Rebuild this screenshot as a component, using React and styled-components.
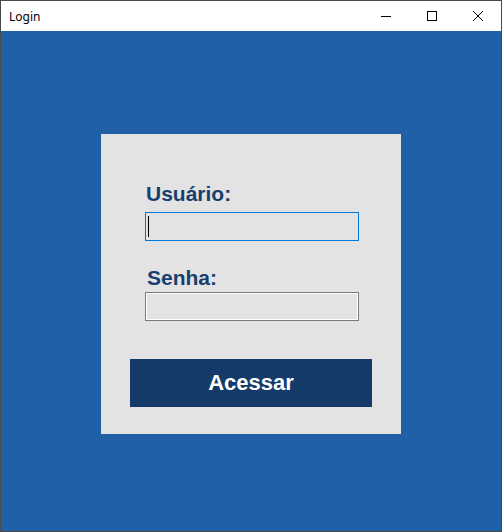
import styled, { createGlobalStyle } from 'styled-components';

const GlobalStyle = createGlobalStyle`
  html, body {
    margin: 0;
    padding: 0;
    background: #ffffff;
  }
`;

const Window = styled.div`
  width: 500px;
  height: 530px;
  border: 1px solid #4a4a4a;
  display: flex;
  flex-direction: column;
  font-family: 'Liberation Sans', Arial, sans-serif;
`;

const TitleBar = styled.div`
  height: 30px;
  background: #ffffff;
  display: flex;
  align-items: center;
`;

const Title = styled.span`
  flex: 1;
  padding-left: 8px;
  font-family: 'Noto Sans', 'Open Sans', sans-serif;
  font-size: 12px;
  color: #000000;
`;

const CaptionButton = styled.div`
  width: 46px;
  height: 30px;
  display: flex;
  align-items: center;
  justify-content: center;
`;

const Client = styled.div`
  flex: 1;
  background: #2060a6;
  display: flex;
  justify-content: center;
  align-items: flex-start;
  padding-top: 103px;
`;

const Panel = styled.div`
  width: 300px;
  height: 300px;
  box-sizing: border-box;
  background: #e3e3e3;
  padding-top: 48px;
  display: flex;
  flex-direction: column;
  align-items: flex-start;
`;

const Label = styled.div`
  margin-left: ${p => p.$left}px;
  margin-top: ${p => p.$top || 0}px;
  margin-bottom: ${p => p.$bottom}px;
  font-size: 21px;
  line-height: 24px;
  font-weight: bold;
  color: #173f6f;
`;

const Field = styled.div`
  position: relative;
  margin-left: 44px;
  width: 214px;
  height: 29px;
  box-sizing: border-box;
  background: #e3e3e3;
  border: 1px solid ${p => (p.$focused ? '#0078d7' : '#7a7a7a')};
  box-shadow: inset 0 0 0 1px ${p => (p.$focused ? '#e3e3e3' : '#ffffff')};
`;

const Caret = styled.span`
  position: absolute;
  left: 2px;
  top: 3px;
  width: 1px;
  height: 21px;
  background: #000000;
`;

const Button = styled.div`
  margin-top: 38px;
  margin-left: 29px;
  width: 242px;
  height: 48px;
  background: #133a68;
  color: #ffffff;
  font-size: 22px;
  font-weight: bold;
  display: flex;
  align-items: center;
  justify-content: center;
`;

export default function App() {
  return (
    <>
      <GlobalStyle />
      <Window>
        <TitleBar>
          <Title>Login</Title>
          <CaptionButton>
            <svg width="10" height="10" viewBox="0 0 10 10">
              <line x1="0" y1="5.5" x2="10" y2="5.5" stroke="#000" strokeWidth="1" />
            </svg>
          </CaptionButton>
          <CaptionButton>
            <svg width="10" height="10" viewBox="0 0 10 10">
              <rect x="0.5" y="0.5" width="9" height="9" fill="none" stroke="#000" strokeWidth="1" />
            </svg>
          </CaptionButton>
          <CaptionButton>
            <svg width="10" height="10" viewBox="0 0 10 10">
              <path d="M0 0 L10 10 M10 0 L0 10" stroke="#000" strokeWidth="1" />
            </svg>
          </CaptionButton>
        </TitleBar>
        <Client>
          <Panel>
            <Label $left={45} $bottom={6}>Usuário:</Label>
            <Field $focused>
              <Caret />
            </Field>
            <Label $left={46} $top={25} $bottom={2}>Senha:</Label>
            <Field />
            <Button>Acessar</Button>
          </Panel>
        </Client>
      </Window>
    </>
  );
}
